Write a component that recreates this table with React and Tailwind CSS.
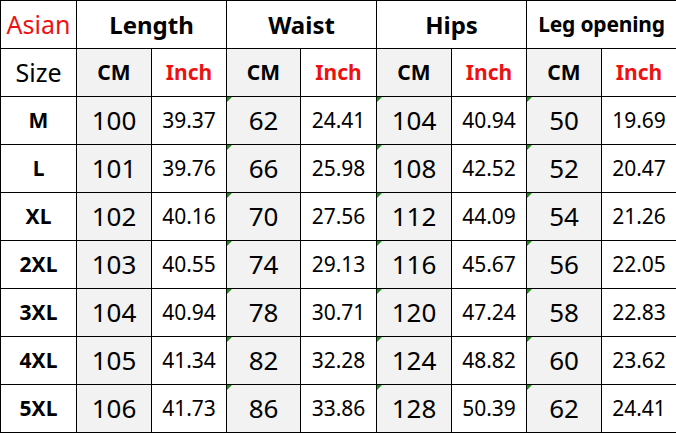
import React from 'react';

const rows = [
    ['M', '100', '39.37', '62', '24.41', '104', '40.94', '50', '19.69'],
    ['L', '101', '39.76', '66', '25.98', '108', '42.52', '52', '20.47'],
    ['XL', '102', '40.16', '70', '27.56', '112', '44.09', '54', '21.26'],
    ['2XL', '103', '40.55', '74', '29.13', '116', '45.67', '56', '22.05'],
    ['3XL', '104', '40.94', '78', '30.71', '120', '47.24', '58', '22.83'],
    ['4XL', '105', '41.34', '82', '32.28', '124', '48.82', '60', '23.62'],
    ['5XL', '106', '41.73', '86', '33.86', '128', '50.39', '62', '24.41'],
];

const cell = 'border border-black text-center p-0';

// small green corner mark seen on some CM cells
const Mark = () => (
    <span className="absolute left-0 top-0 w-0 h-0 border-t-[5px] border-r-[5px] border-t-[#1e8a1e] border-r-transparent" />
);

const App = () => {
    return (
        <div className="w-[676px] h-[433px] bg-white" style={{ fontFamily: '"Noto Sans", "Open Sans", sans-serif' }}>
            <table className="border-collapse table-fixed w-[676px] text-black">
                <colgroup>
                    <col className="w-[76px]" />
                    <col className="w-[75px]" />
                    <col className="w-[75px]" />
                    <col className="w-[74px]" />
                    <col className="w-[76px]" />
                    <col className="w-[75px]" />
                    <col className="w-[75px]" />
                    <col className="w-[75px]" />
                    <col className="w-[75px]" />
                </colgroup>
                <tbody>
                    <tr className="h-[48px]">
                        <td className={`${cell} text-[25px] text-[#ee1111]`}>Asian</td>
                        <td colSpan={2} className={`${cell} text-[24px] font-bold`}>Length</td>
                        <td colSpan={2} className={`${cell} text-[24px] font-bold`}>Waist</td>
                        <td colSpan={2} className={`${cell} text-[24px] font-bold`}>Hips</td>
                        <td colSpan={2} className={`${cell} text-[21px] font-bold tracking-[-0.2px] whitespace-nowrap`}>Leg opening</td>
                    </tr>
                    <tr className="h-[48px]">
                        <td className={`${cell} text-[25px]`}>Size</td>
                        {[0, 1, 2, 3].map((i) => (
                            <React.Fragment key={i}>
                                <td className={`${cell} bg-[#f2f2f2] text-[21px] font-bold`}>CM</td>
                                <td className={`${cell} text-[21px] font-bold text-[#ee1111]`}>Inch</td>
                            </React.Fragment>
                        ))}
                    </tr>
                    {rows.map((r) => (
                        <tr key={r[0]} className="h-[48px]">
                            <td className={`${cell} text-[21px] font-bold`}>{r[0]}</td>
                            {r.slice(1).map((v, i) =>
                                i % 2 === 0 ? (
                                    <td key={i} className={`${cell} relative bg-[#f2f2f2] text-[26px]`}>
                                        {i > 0 && <Mark />}
                                        {v}
                                    </td>
                                ) : (
                                    <td key={i} className={`${cell} text-[21px]`}>{v}</td>
                                )
                            )}
                        </tr>
                    ))}
                </tbody>
            </table>
        </div>
    );
};

export default App;
